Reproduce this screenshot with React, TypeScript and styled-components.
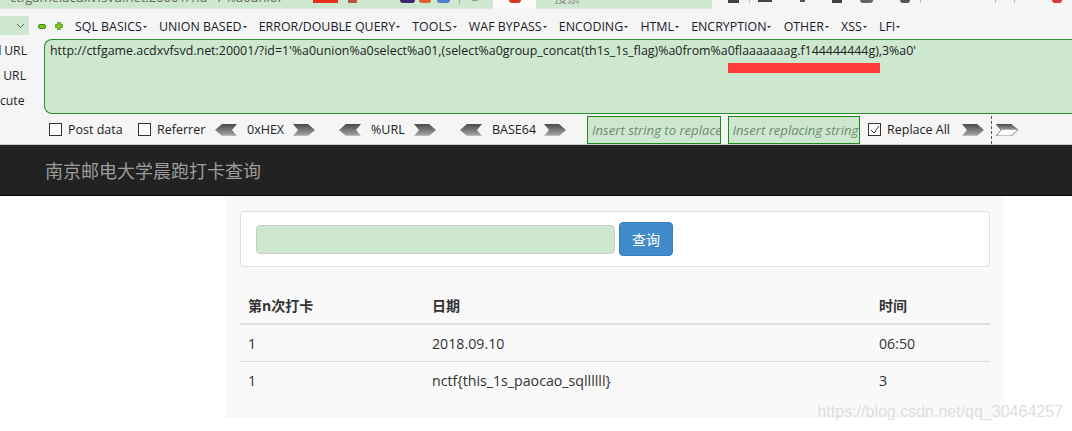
import styled, { createGlobalStyle } from 'styled-components'

const GlobalStyle = createGlobalStyle`
  html, body { margin: 0; padding: 0; background: #fff; }
  body { width: 1072px; height: 431px; overflow: hidden; font-family: "Open Sans", "Liberation Sans", "Noto Sans CJK SC", sans-serif; }
`

const Page = styled.div`width: 1072px; height: 431px; overflow: hidden; position: relative;`

/* browser chrome strip, cut off at the top of the picture */
const TabStrip = styled.div`
  height: 16px; background: #f5f5f5; display: flex; align-items: flex-start;
`
const GreenField = styled.div<{ $w: number }>`
  width: ${p => p.$w}px; height: 8px; background: #cde8cf; flex: none; display: flex; align-items: flex-start;
  overflow: hidden; box-shadow: 0 1px 0 #e2e6e2;
`
const CutText = styled.span<{ $ml: number; $w: number; $c?: string }>`
  margin-left: ${p => p.$ml}px; margin-top: -11px; font-size: 13px; line-height: 16px; color: ${p => p.$c || '#666'};
  white-space: nowrap; flex: none; width: ${p => p.$w}px; overflow: hidden;
`
const ActiveTab = styled.div`
  width: 43px; height: 8px; flex: none; background: #fbfbfb; display: flex; justify-content: center;
`
const Glyph = styled.span<{ $w: number; $h?: number; $c: string; $ml: number; $round?: boolean }>`
  display: block; flex: none; width: ${p => p.$w}px; height: ${p => p.$h ?? 3}px; background: ${p => p.$c};
  margin-left: ${p => p.$ml}px; border-radius: ${p => p.$round ? `0 0 ${p.$w / 2}px ${p.$w / 2}px` : '0'};
`

const HackBar = styled.div`
  background: #f5f5f5; height: 129px; display: flex; flex-direction: column; border-bottom: 1px solid #ccc; box-sizing: border-box;
`
const MenuRow = styled.div`
  height: 23px; display: flex; align-items: center; padding-bottom: 3px; box-sizing: border-box;
`
const SelectStub = styled.div`
  width: 29px; height: 19px; background: #cde8cf; display: flex; align-items: center; justify-content: flex-end;
  padding-right: 2px; box-sizing: border-box; align-self: flex-start;
`
const RoundBtn = styled.svg`display: block; margin-left: 9px; flex: none;`
const Menu = styled.div`
  display: flex; margin-left: 12px; gap: 12.2px; font-size: 12.4px; color: #1a1a2a; white-space: nowrap;
`
const MenuItem = styled.span`
  &::after {
    content: ''; display: inline-block; vertical-align: middle; margin-left: 1px;
    border: 2px solid transparent; border-top: 2px solid #222; border-bottom: 0;
  }
`

const UrlRow = styled.div`
  display: flex; height: 75px;
`
const SideActions = styled.div`
  width: 44px; flex: none; display: flex; flex-direction: column; font-size: 12.2px; color: #222;
`
const SideAction = styled.div<{ $r: number; $mark?: boolean }>`
  position: relative; height: 25.5px; line-height: 24px; padding-right: ${p => p.$r}px; white-space: nowrap; overflow: hidden;
  width: 100%; box-sizing: border-box; text-align: right;
  ${p => p.$mark ? `&::before { content: ''; position: absolute; left: 0; top: 6px; width: 1px; height: 10px; background: #4a9be0; }` : ''}
`
const UrlBox = styled.div`
  position: relative; flex: 1; background: #cde8cf; border: 1px solid #2e8b2e; border-right: 0;
  border-radius: 8px 0 0 8px; font-size: 12.42px; line-height: 18px; color: #1d1d1d;
  padding: 2px 0 0 5px; box-sizing: border-box; white-space: nowrap; overflow: hidden;
`
const RedMark = styled.div`
  position: absolute; left: 683px; top: 23px; width: 152px; height: 10px; background: #ff3b3b;
`

const OptionRow = styled.div`
  flex: 1; display: flex; align-items: center; font-size: 12.5px; color: #222; padding: 1px 0 0 49px; white-space: nowrap;
`
const Check = styled.span`
  width: 13px; height: 13px; border: 1px solid #333; background: #fff; display: inline-flex; box-sizing: border-box;
  align-items: center; justify-content: center; margin-right: 6px; flex: none;
`
const OptLabel = styled.span<{ $w: number }>`width: ${p => p.$w}px; flex: none;`
const ChevronSvg = styled.svg<{ $after: number }>`display: block; flex: none; margin-right: ${p => p.$after}px;`
const ReplaceInput = styled.div<{ $w: number; $after: number }>`
  width: ${p => p.$w}px; height: 28px; box-sizing: border-box; margin-right: ${p => p.$after}px; flex: none;
  background: #cde8cf; border: 1px solid #1f8a1f; color: #6d8a72; font-style: italic;
  line-height: 26px; padding-left: 4px; overflow: hidden; font-size: 13.1px;
`
const DashSep = styled.div`
  height: 28px; border-left: 1px dashed #555; margin: 0 4px 0 7px; flex: none;
`

const NavBar = styled.div`
  height: 50px; background: #222; border-bottom: 1px solid #080808; display: flex; align-items: center; padding-left: 45px;
  box-sizing: content-box; color: #9d9d9d; font-size: 18px;
  font-family: "Noto Sans CJK SC", sans-serif;
`

const Main = styled.div`
  width: 779px; margin-left: 225px; height: 222px; background: #f9f9f9; padding: 15px 14px 0 15px; box-sizing: border-box;
`
const SearchPanel = styled.div`
  height: 56px; background: #fff; border: 1px solid #ddd; border-radius: 4px; box-sizing: border-box;
  display: flex; align-items: center; padding-left: 15px; gap: 4px;
`
const SearchInput = styled.div`
  width: 359px; height: 29px; box-sizing: border-box; background: #cde8cf; border: 1px solid #ccc; border-radius: 4px;
`
const SearchButton = styled.button`
  width: 54px; height: 34px; background: #428bca; border: 1px solid #357ebd; border-radius: 4px; color: #fff;
  font-size: 14px; padding: 0; font-family: "Noto Sans CJK SC", sans-serif;
`
const Table = styled.table`
  width: 100%; margin-top: 19px; border-collapse: collapse; font-size: 14.2px; color: #333; table-layout: fixed;
  font-family: "Open Sans", "Noto Sans CJK SC", sans-serif;
`
const Th = styled.th<{ $w?: number }>`
  text-align: left; font-weight: 700; padding: 8px; height: 21px; border-bottom: 2px solid #ddd; font-size: 14px;
  ${p => p.$w ? `width: ${p.$w}px;` : ''}
`
const Td = styled.td`
  padding: 8px; height: 20px; border-bottom: 1px solid #ddd;
  tr:last-child & { border-bottom: 0; }
`
const Watermark = styled.div`
  position: absolute; right: 9px; top: 403px; font-size: 16px; color: #dedede; font-family: "Liberation Sans", sans-serif;
`

function Chevron({ dir, after, hollow }: { dir: 'l' | 'r'; after: number; hollow?: boolean }) {
  const id = `g${dir}${after}${hollow ? 'h' : ''}`
  const pts = dir === 'l' ? '7,0 22,0 17,6 22,12 7,12 0,6' : '0,0 15,0 22,6 15,12 0,12 5,6'
  return (
    <ChevronSvg $after={after} width={22} height={12} viewBox="0 0 22 12">
      <defs>
        <linearGradient id={id} x1="0" y1="0" x2="0" y2="1">
          <stop offset="0" stopColor="#4a4a4a" />
          <stop offset={hollow ? '0.45' : '0.85'} stopColor={hollow ? '#999' : '#999'} />
          <stop offset={hollow ? '0.5' : '1'} stopColor={hollow ? '#fff' : '#c4c4c4'} />
        </linearGradient>
      </defs>
      <polygon points={pts} fill={`url(#${id})`} stroke={hollow ? '#555' : 'none'} strokeWidth={hollow ? 0.7 : 0} />
    </ChevronSvg>
  )
}

const menu = ['SQL BASICS', 'UNION BASED', 'ERROR/DOUBLE QUERY', 'TOOLS', 'WAF BYPASS', 'ENCODING', 'HTML', 'ENCRYPTION', 'OTHER', 'XSS', 'LFI']

export default function App() {
  return (
    <Page>
      <GlobalStyle />
      <TabStrip>
        <GreenField $w={493}>
          <CutText $ml={10} $w={272}>ctfgame.acdxvfsvd.net:20001/?id=1'%a0union</CutText>
          <Glyph $w={25} $h={3} $c="#e8301a" $ml={31} />
          <Glyph $w={9} $h={3} $c="#c05050" $ml={10} />
          <Glyph $w={15} $h={3} $c="#3a2a6a" $ml={43} $round />
          <Glyph $w={12} $h={3} $c="#e0602a" $ml={4} $round />
          <Glyph $w={13} $h={3} $c="#4a80c8" $ml={6} $round />
          <Glyph $w={1} $h={4} $c="#aaa" $ml={9} />
          <Glyph $w={6} $h={1} $c="#999" $ml={12} />
        </GreenField>
        <ActiveTab>
          <Glyph $w={12} $h={3} $c="#d83a2a" $ml={0} $round />
        </ActiveTab>
        <GreenField $w={176}>
          <CutText $ml={18} $w={40} $c="#888">搜索</CutText>
        </GreenField>
        <Glyph $w={11} $h={3} $c="#444" $ml={16} />
        <Glyph $w={1} $h={3} $c="#bbb" $ml={10} />
        <Glyph $w={14} $h={2} $c="#444" $ml={8} />
        <Glyph $w={5} $h={2} $c="#555" $ml={28} />
        <Glyph $w={10} $h={3} $c="#444" $ml={27} />
        <Glyph $w={13} $h={3} $c="#666" $ml={18} $round />
        <Glyph $w={10} $h={3} $c="#555" $ml={27} $round />
        <Glyph $w={1} $h={3} $c="#bbb" $ml={10} />
        <Glyph $w={1} $h={3} $c="#bbb" $ml={74} />
        <Glyph $w={1} $h={3} $c="#bbb" $ml={18} />
        <Glyph $w={10} $h={3} $c="#d83a3a" $ml={37} $round />
      </TabStrip>
      <HackBar>
        <MenuRow>
          <SelectStub>
            <svg width="9" height="6" viewBox="0 0 9 6" style={{ marginRight: 2 }}><path d="M1 1l3.5 3.5L8 1" fill="none" stroke="#666" strokeWidth="1" /></svg>
          </SelectStub>
          <RoundBtn width="8" height="5" viewBox="0 0 8 5"><rect x=".5" y=".5" width="7" height="4" rx="1.5" fill="#7cc31c" stroke="#3f8a10" /></RoundBtn>
          <RoundBtn width="8" height="8" viewBox="0 0 8 8"><path d="M2.5.5h3v2h2v3h-2v2h-3v-2h-2v-3h2z" fill="#7cc31c" stroke="#3f8a10" strokeWidth=".7" /></RoundBtn>
          <Menu>
            {menu.map(m => <MenuItem key={m}>{m}</MenuItem>)}
          </Menu>
        </MenuRow>
        <UrlRow>
          <SideActions>
            <SideAction $r={17} $mark>URL</SideAction>
            <SideAction $r={18}>URL</SideAction>
            <SideAction $r={23}>cute</SideAction>
          </SideActions>
          <UrlBox>
            http://ctfgame.acdxvfsvd.net:20001/?id=1'%a0union%a0select%a01,(select%a0group_concat(th1s_1s_flag)%a0from%a0flaaaaaaag.f144444444g),3%a0'
            <RedMark />
          </UrlBox>
        </UrlRow>
        <OptionRow>
          <Check />
          <OptLabel $w={70}>Post data</OptLabel>
          <Check />
          <OptLabel $w={58}>Referrer</OptLabel>
          <Chevron dir="l" after={10} />
          <OptLabel $w={46}>0xHEX</OptLabel>
          <Chevron dir="r" after={24} />
          <Chevron dir="l" after={10} />
          <OptLabel $w={43}>%URL</OptLabel>
          <Chevron dir="r" after={24} />
          <Chevron dir="l" after={10} />
          <OptLabel $w={52}>BASE64</OptLabel>
          <Chevron dir="r" after={21} />
          <ReplaceInput $w={134} $after={6.5}>Insert string to replace</ReplaceInput>
          <ReplaceInput $w={132.5} $after={8}>Insert replacing string</ReplaceInput>
          <Check>
            <svg width="10" height="10" viewBox="0 0 10 10"><path d="M1 5l3 3 5-7" fill="none" stroke="#333" strokeWidth="1" /></svg>
          </Check>
          <OptLabel $w={75}>Replace All</OptLabel>
          <Chevron dir="r" after={0} />
          <DashSep />
          <Chevron dir="r" after={0} hollow />
        </OptionRow>
      </HackBar>
      <NavBar>南京邮电大学晨跑打卡查询</NavBar>
      <Main>
        <SearchPanel>
          <SearchInput />
          <SearchButton>查询</SearchButton>
        </SearchPanel>
        <Table>
          <thead>
            <tr><Th $w={168}>第n次打卡</Th><Th $w={431}>日期</Th><Th>时间</Th></tr>
          </thead>
          <tbody>
            <tr><Td>1</Td><Td>2018.09.10</Td><Td>06:50</Td></tr>
            <tr><Td>1</Td><Td>nctf{'{'}this_1s_paocao_sqllllll{'}'}</Td><Td>3</Td></tr>
          </tbody>
        </Table>
      </Main>
      <Watermark>https://blog.csdn.net/qq_30464257</Watermark>
    </Page>
  )
}
